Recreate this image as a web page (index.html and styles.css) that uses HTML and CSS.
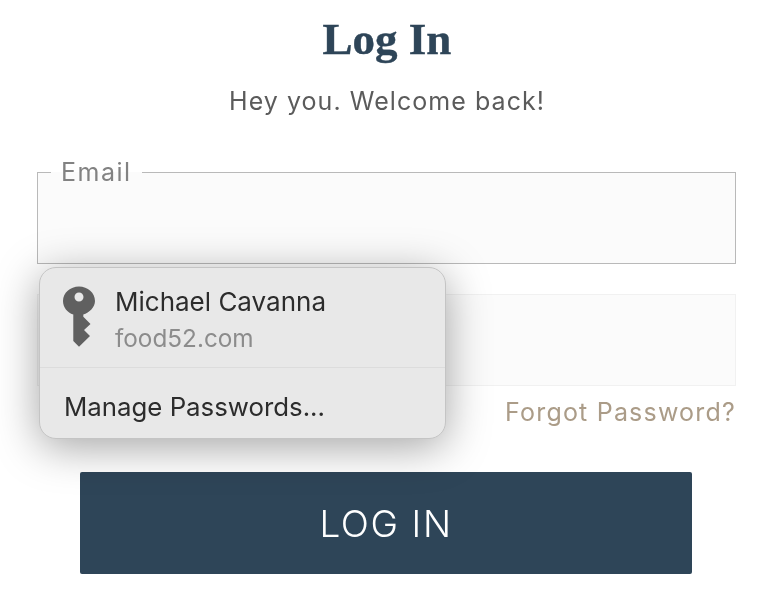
FILE: index.html
```html
<!DOCTYPE html>
<html lang="en">
<head>
  <meta charset="UTF-8">
  <title>Log In</title>
  <link rel="stylesheet" href="styles.css">
</head>
<body>
  <div class="login-container">
    <h1>Log In</h1>
    <p class="welcome">Hey you. Welcome back!</p>

    <form class="login-form" onsubmit="return false">
      <fieldset class="field field-active">
        <legend>Email</legend>
        <input type="email" aria-label="Email">
      </fieldset>
      <div class="field field-plain">
        <input type="password" aria-label="Password">
      </div>
      <a class="forgot" href="#">Forgot Password?</a>
      <button type="submit">LOG IN</button>

      <div class="autofill-menu">
        <div class="autofill-account">
          <svg class="key-icon" viewBox="0 0 32 62" width="32" height="62" aria-hidden="true">
            <path fill="#606060" fill-rule="evenodd" d="M16 .5C7.200.5 0 6.900 0 15c0 6.300 4.300 11.600 10.300 13.600V55L16 60.700 27 50l-6-6 6.500-6-7.200-7.300v-2.100C26.300 26.600 32 21.300 32 15 32 6.900 24.800.5 16 .5zM16 6.500c2.500 0 4.500 2 4.500 4.500s-2 4.500-4.500 4.500-4.500-2-4.500-4.500 2-4.500 4.500-4.500z"/>
          </svg>
          <div class="account-text">
            <div class="account-name">Michael Cavanna</div>
            <div class="account-site">food52.com</div>
          </div>
        </div>
        <div class="autofill-manage">Manage Passwords...</div>
      </div>
    </form>
  </div>
</body>
</html>
```

FILE: styles.css
```css
body {
  margin: 0;
  background: #fff;
  font-family: "Inter", "Liberation Sans", sans-serif;
  overflow: hidden;
}
.login-container {
  width: 774px;
  height: 596px;
  box-sizing: border-box;
  padding-top: 16px;
  text-align: center;
  filter: blur(0.5px);
}
h1 {
  margin: 0;
  height: 46px;
  font-family: "Liberation Serif", serif;
  font-size: 45px;
  line-height: 46px;
  font-weight: bold;
  color: #2e4558;
  -webkit-text-stroke: 0.4px #2e4558;
}
.welcome {
  margin: 24px 0 0;
  height: 30px;
  font-size: 25px;
  line-height: 30px;
  letter-spacing: 1.05px;
  color: #5b5b5b;
}
.login-form {
  position: relative;
  display: flex;
  flex-direction: column;
  margin: 41px 38px 0 37px;
}
.field {
  box-sizing: border-box;
  margin: 0;
  padding: 0;
  min-width: 0;
  background: #fbfbfb;
}
.field input {
  display: block;
  width: 100%;
  height: 100%;
  box-sizing: border-box;
  border: none;
  outline: none;
  background: transparent;
}
.field-active {
  height: 107px;
  border: 1.5px solid #b9b9b9;
}
.field-active legend {
  margin-left: 13px;
  padding: 0 10px;
  height: 30px;
  font-size: 25px;
  line-height: 30px;
  letter-spacing: 1.5px;
  text-align: left;
  color: #828282;
}
.field-active input {
  height: 76px;
}
.field-plain {
  height: 92px;
  margin-top: 30px;
  border: 1.5px solid #f1f1f1;
}
.forgot {
  align-self: flex-end;
  margin-top: 11px;
  height: 30px;
  font-size: 25px;
  line-height: 30px;
  letter-spacing: 1.2px;
  color: #ab9c88;
  text-decoration: none;
}
button {
  align-self: center;
  width: 612px;
  height: 102px;
  margin: 45px 0 0 -1px;
  border: none;
  border-radius: 2px;
  background: #2e4558;
  color: #fff;
  font-family: inherit;
  font-size: 37px;
  font-weight: 300;
  letter-spacing: 1.6px;
}
.autofill-menu {
  position: absolute;
  left: 2px;
  top: 110px;
  width: 407px;
  height: 172px;
  box-sizing: border-box;
  border: 1.5px solid #c4c4c4;
  border-radius: 17px;
  background: #e8e8e8;
  box-shadow: 0 8px 44px rgba(0, 0, 0, 0.36);
  text-align: left;
  color: #2c2c2c;
}
.autofill-account {
  display: flex;
  height: 100px;
  box-sizing: border-box;
  padding: 18px 0 0 23px;
  border-bottom: 1.5px solid #dcdcdc;
}
.key-icon {
  flex: none;
}
.account-text {
  margin: 1px 0 0 20px;
}
.account-name {
  font-size: 26px;
  line-height: 30px;
}
.account-site {
  font-size: 24.3px;
  line-height: 30px;
  margin-top: 6px;
  color: #8c8c8c;
}
.autofill-manage {
  padding: 24px 0 0 24px;
  font-size: 25.800px;
  line-height: 30px;
}
```
